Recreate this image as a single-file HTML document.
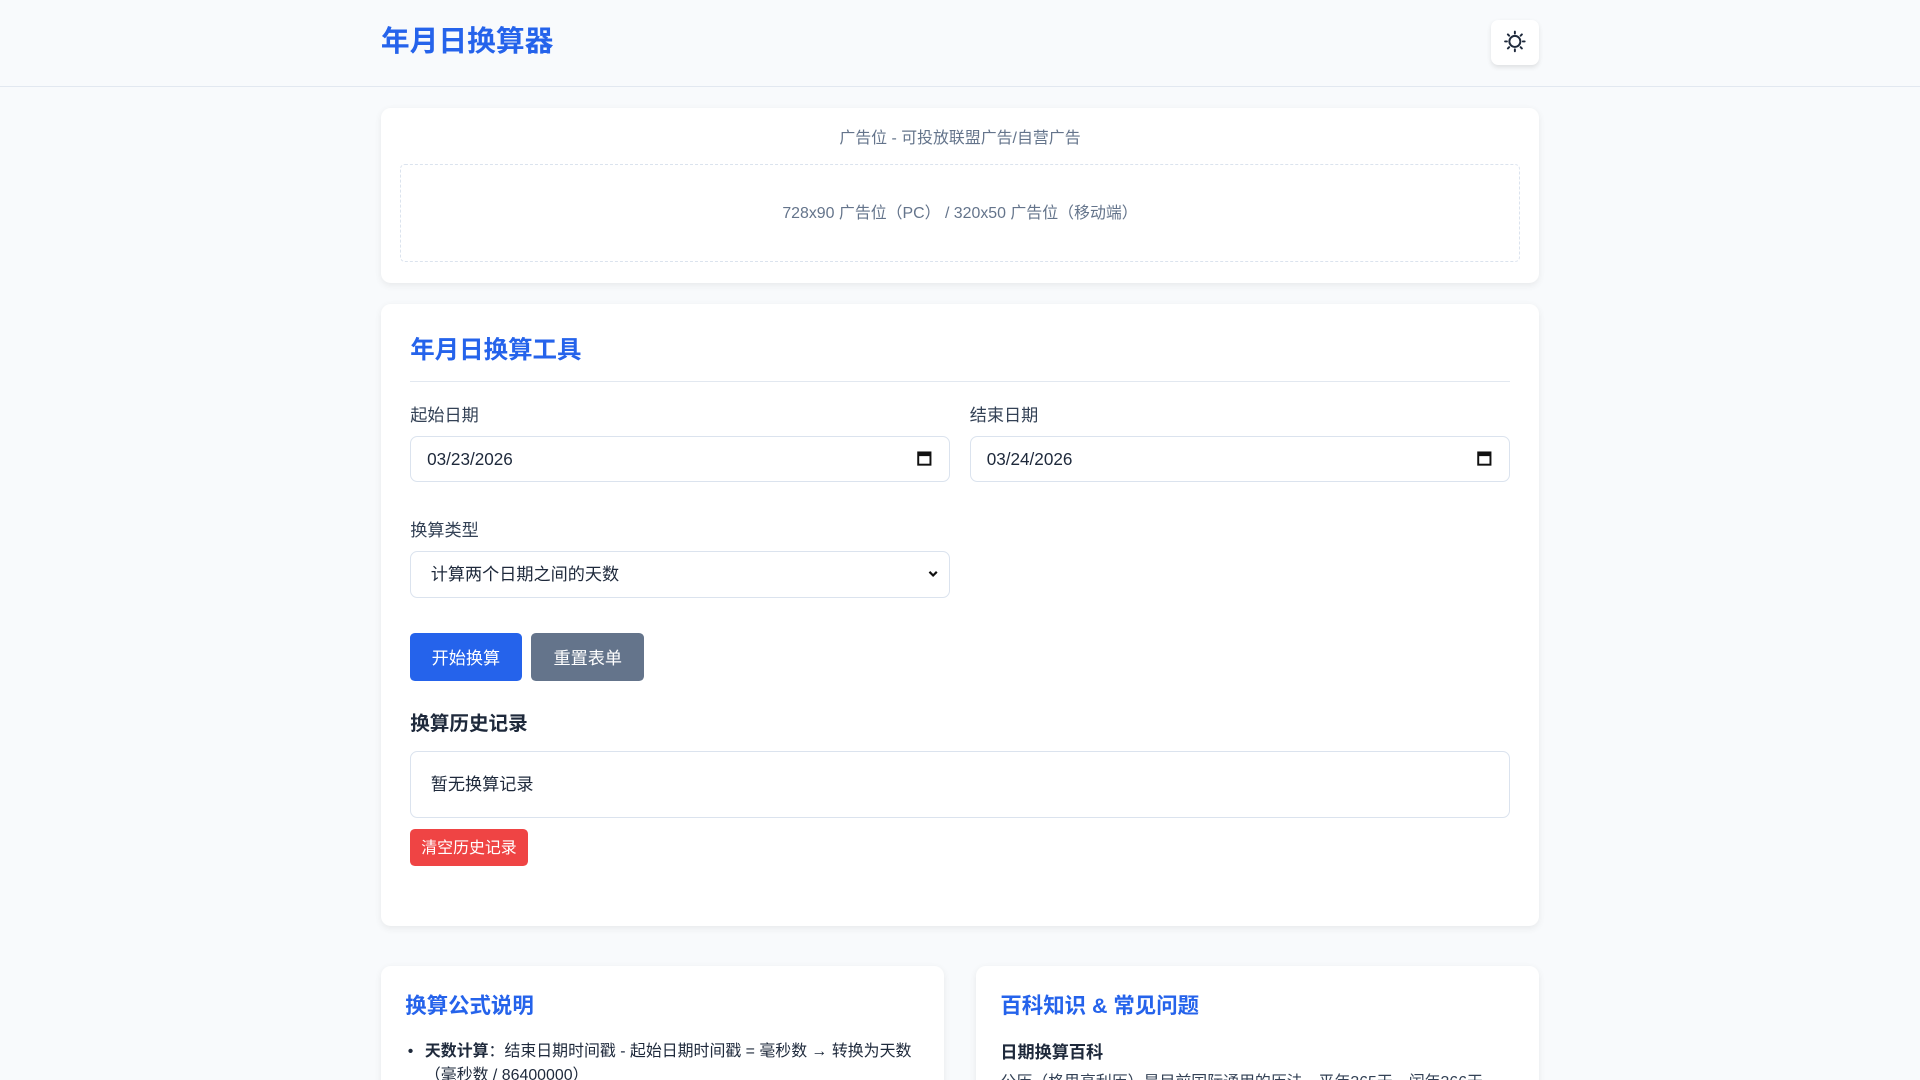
<!DOCTYPE html>
<html><head><meta charset="utf-8"><style>
*{box-sizing:border-box;margin:0;padding:0}
html,body{width:1920px;height:1080px;overflow:hidden;background:#f8fafc}
body{font-family:"Liberation Sans","Noto Sans CJK SC",sans-serif;color:#1e293b}
#z{zoom:1.22449;width:1568px;height:882px;position:relative}
.a{position:absolute}
.hdr{left:0;top:0;width:1568px;height:71px;border-bottom:1px solid #e2e8f0;background:#f8fafc}
.logo{left:311px;top:19px;font-size:23.5px;font-weight:bold;color:#2563eb;line-height:32px}
.tb{left:1218px;top:16px;width:39px;height:37px;background:#fff;border-radius:6px;box-shadow:0 2px 4px rgba(0,0,0,.1)}
.card{background:#fff;border-radius:8px;box-shadow:0 2px 6px rgba(0,0,0,.07)}
.lbl{font-size:14px;color:#334155;line-height:20px}
.inp{height:38px;border:1px solid #dbe3ee;border-radius:6px;background:#fff;font-size:14px;color:#1e293b;line-height:36px;padding-left:13px}
.btn{height:39px;border-radius:4px;color:#fff;font-size:14px;text-align:center;line-height:41px}
</style></head><body><div id="z">
<div class="a hdr"></div>
<div class="a logo">年月日换算器</div>
<div class="a tb"><svg width="39" height="37" viewBox="0 0 39 37"><g stroke="#1e293b" stroke-width="1.6" fill="none" stroke-linecap="round"><circle cx="19.5" cy="17.5" r="4.5"/><path d="M19.5 9.5v1.5M19.5 24v1.5M11.5 17.5h1.5M26 17.5h1.5M13.8 11.8l1 1M24.2 22.2l1 1M13.8 23.2l1-1M24.2 12.8l1-1"/></g></svg></div>

<div class="a card" style="left:311px;top:88px;width:946px;height:143px"></div>
<div class="a" style="left:311px;top:104px;width:946px;text-align:center;font-size:13px;color:#64748b;line-height:20px">广告位 - 可投放联盟广告/自营广告</div>
<div class="a" style="left:327px;top:134px;width:914px;height:80px;border:1px dashed #dbe3ee;border-radius:4px;text-align:center;line-height:80px;font-size:13px;color:#64748b">728x90 广告位（PC） / 320x50 广告位（移动端）</div>

<div class="a card" style="left:311px;top:248px;width:946px;height:508px"></div>
<div class="a" style="left:335px;top:273px;font-size:20px;font-weight:bold;color:#2563eb;line-height:28px">年月日换算工具</div>
<div class="a" style="left:335px;top:311px;width:898px;height:1px;background:#e2e8f0"></div>
<div class="a lbl" style="left:335px;top:329px">起始日期</div>
<div class="a lbl" style="left:792px;top:329px">结束日期</div>
<div class="a inp" style="left:335px;top:356px;width:441px">03/23/2026<svg class="a" style="right:14px;top:11px" width="12" height="13" viewBox="0 0 12 13"><rect x="1" y="2" width="10" height="10" fill="none" stroke="#111" stroke-width="1.6"/><rect x="1" y="2" width="10" height="3" fill="#111"/></svg></div>
<div class="a inp" style="left:792px;top:356px;width:441px">03/24/2026<svg class="a" style="right:14px;top:11px" width="12" height="13" viewBox="0 0 12 13"><rect x="1" y="2" width="10" height="10" fill="none" stroke="#111" stroke-width="1.6"/><rect x="1" y="2" width="10" height="3" fill="#111"/></svg></div>
<div class="a lbl" style="left:335px;top:423px">换算类型</div>
<div class="a inp" style="left:335px;top:450px;width:441px;padding-left:16px">计算两个日期之间的天数<svg class="a" style="right:8px;top:15px" width="10" height="7" viewBox="0 0 10 7"><path d="M2 1.5l3 3 3-3" stroke="#111" stroke-width="1.8" fill="none"/></svg></div>
<div class="a btn" style="left:335px;top:517px;width:91px;background:#2563eb">开始换算</div>
<div class="a btn" style="left:434px;top:517px;width:92px;background:#64748b">重置表单</div>
<div class="a" style="left:335px;top:581px;font-size:16px;font-weight:bold;color:#1e293b;line-height:22px">换算历史记录</div>
<div class="a" style="left:335px;top:613px;width:898px;height:55px;border:1px solid #dbe3ee;border-radius:6px;font-size:14px;line-height:53px;padding-left:16px;color:#1e293b">暂无换算记录</div>
<div class="a btn" style="left:335px;top:677px;width:96px;height:30px;line-height:32px;font-size:13px;background:#ef4444">清空历史记录</div>

<div class="a card" style="left:311px;top:789px;width:460px;height:120px"></div>
<div class="a card" style="left:797px;top:789px;width:460px;height:120px"></div>
<div class="a" style="left:331px;top:810px;font-size:17.5px;font-weight:bold;color:#2563eb;line-height:24px">换算公式说明</div>
<div class="a" style="left:817px;top:810px;font-size:17.5px;font-weight:bold;color:#2563eb;line-height:24px">百科知识 &amp; 常见问题</div>
<div class="a" style="left:333px;top:849px;width:420px;font-size:13px;line-height:20px;color:#1e293b"><span style="position:absolute;left:0">•</span><div style="padding-left:14px"><b>天数计算</b>：结束日期时间戳 - 起始日期时间戳 = 毫秒数 → 转换为天数（毫秒数 / 86400000）</div></div>
<div class="a" style="left:817px;top:849px;font-size:14px;font-weight:bold;line-height:20px">日期换算百科</div>
<div class="a" style="left:817px;top:875px;font-size:13px;line-height:20px;color:#334155">公历（格里高利历）是目前国际通用的历法，平年365天，闰年366天</div>
</div></body></html>
